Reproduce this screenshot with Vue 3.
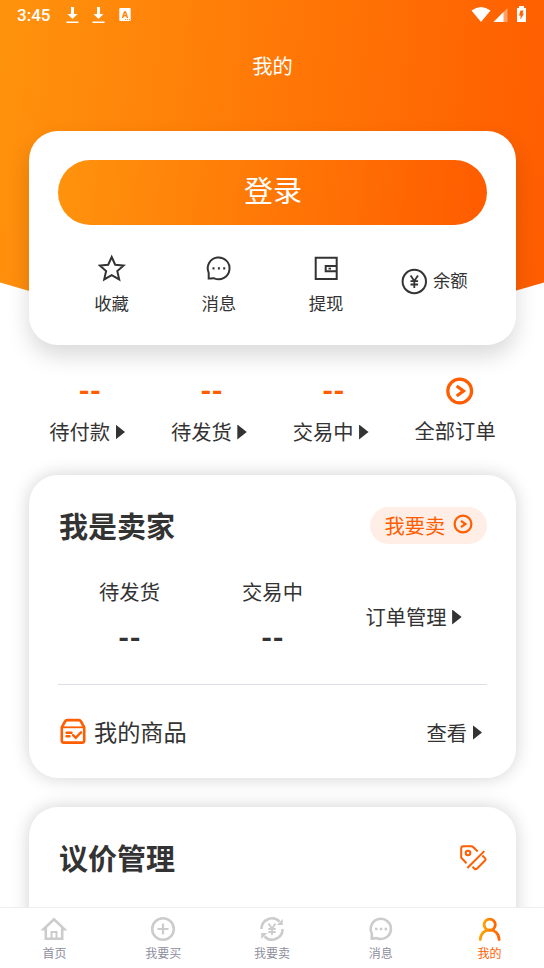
<script setup>
const orders = ['待付款', '待发货', '交易中']
const tabs = [
  { label: '首页', icon: 'home' },
  { label: '我要买', icon: 'buy' },
  { label: '我要卖', icon: 'sell' },
  { label: '消息', icon: 'chat' },
  { label: '我的', icon: 'user', active: true }
]
</script>

<template>
  <div class="page">
    <header class="hero">
      <div class="status">
        <span class="time">3:45</span>
        <svg v-for="n in 2" :key="n" class="dl" viewBox="0 0 13 17"><path d="M5 0h3v7h3.500L6.500 12 1.500 7H5zM.5 14.500h12V16H.5z" fill="#fff" /></svg>
        <svg class="badge" viewBox="0 0 12 13"><rect x=".3" width="11.400" height="13" rx="1" fill="#fff" /><path d="M3.500 10 5.500 4h1l2 6M4.300 7.800h3.400" fill="none" stroke-width="1.500" /><path d="M6 11.500h5" stroke-width=".8" stroke-dasharray="1 1" /></svg>
        <span class="space"></span>
        <svg class="sys" viewBox="0 0 56 17">
          <path d="M.5 4.500Q10-2.500 19.500 4.500L10 16z" fill="#fff" />
          <path d="M36.500 2v14H22.500z" fill="#fff" fill-opacity=".4" />
          <path d="M32.500 6v10h-10z" fill="#fff" />
          <path d="M46 2h2V0h5v2h2v14h-9z" fill="#fff" />
          <path d="M49.500 4.500h3l-1 3H53l-3.500 6v-4H48z" fill="#ff6303" />
        </svg>
      </div>
      <h1>我的</h1>
    </header>

    <main>
      <section class="card account">
        <button class="login">登录</button>
        <div class="shortcuts">
          <div class="shortcut">
            <svg viewBox="0 0 28 28"><path d="m13.700 3 3.500 7.700 8.400.8-6.300 5.600 1.900 8.300-7.500-4.300-7.500 4.300 1.900-8.300-6.300-5.600 8.400-.8z" /></svg>
            <span>收藏</span>
          </div>
          <div class="shortcut">
            <svg viewBox="0 0 28 28"><path d="M3.700 24.600V18.800A10.900 10.900 0 1 1 9.200 24.300C7.500 24 5.500 24.600 3.700 24.600Z" /><path d="M7.500 14.300h2M12.900 14.300h2M18.200 14.300h2" stroke-width="2.200" /></svg>
            <span>消息</span>
          </div>
          <div class="shortcut">
            <svg viewBox="0 0 28 28"><path d="M3.700 3.800h21v21.300h-21zM24.700 12h-11v5.300h11" /><path d="M16.500 14.600h2.500" stroke-width="1.800" /></svg>
            <span>提现</span>
          </div>
          <div class="balance">
            <svg viewBox="0 0 28 28"><circle cx="13.300" cy="13.500" r="11.700" /><path d="m9.600 7.500 3.700 5.500L17 7.500M13.300 12.500V20M9.500 13.200h7.600M9.500 16.500h7.600" stroke-width="1.800" /></svg>
            <span>余额</span>
          </div>
        </div>
      </section>

      <section class="orders">
        <div v-for="item in orders" :key="item" class="order">
          <b>--</b>
          <p>{{ item }}<i class="tri"></i></p>
        </div>
        <div class="order all">
          <svg viewBox="0 0 28 28"><circle cx="13.700" cy="14" r="11.900" /><path d="m10.700 9 6.800 5-6.800 5" /></svg>
          <p>全部订单</p>
        </div>
      </section>

      <section class="card seller">
        <div class="heading">
          <h2>我是卖家</h2>
          <button class="sell">我要卖<svg viewBox="0 0 20 20"><circle cx="10" cy="10" r="8.400" /><path d="m8 6.800 4.500 3.200L8 13.200" /></svg></button>
        </div>
        <div class="stats">
          <div class="stat"><span>待发货</span><b>--</b></div>
          <div class="stat"><span>交易中</span><b>--</b></div>
          <p class="manage">订单管理<i class="tri"></i></p>
        </div>
        <div class="goods">
          <svg viewBox="0 0 28 28"><path d="M2.800 10.300 6 4.500q.8-1.400 2.200-1.400h11.600q1.400 0 2.200 1.400l3.200 5.800v13.500q0 1.800-1.800 1.800H4.600q-1.800 0-1.800-1.800z" /><path d="M3 10.300h22" stroke-width="1.800" /><path d="M7.500 15.700h5M7.500 19.300h3M14 18.200l2.700 2.600 5.300-5.500" stroke-width="2.400" stroke-linecap="round" /></svg>
          <span>我的商品</span>
          <p>查看<i class="tri"></i></p>
        </div>
      </section>

      <section class="card bargain">
        <div class="heading">
          <h2>议价管理</h2>
          <svg viewBox="0 0 28 28"><path d="M7.500 19.200 2.200 13.700V4.300Q2.200 2.300 4.200 2.300H12q1.400 0 2.400 1l4.300 4.200M8.400 24 25.300 7.100M13.500 22.800l1.800 1.700q1.400 1.300 2.800 0l7.700-7.700q1.400-1.400.1-2.700l-2.500-2.600" /><circle cx="9" cy="9" r="2.300" /></svg>
        </div>
      </section>
    </main>

    <nav>
      <div v-for="tab in tabs" :key="tab.label" class="tab" :class="{ active: tab.active }">
        <svg viewBox="0 0 26 26">
          <template v-if="tab.icon === 'home'"><path d="M2.500 13.300 13 3.300l10.500 10h-2.300v9.500H4.800v-9.500z" /><path d="M10.500 23v-7h5v7" stroke-width="2" /></template>
          <template v-else-if="tab.icon === 'buy'"><circle cx="13" cy="13" r="10.800" /><path d="M13 7.500v11M7.500 13h11" stroke-width="2.200" /></template>
          <template v-else-if="tab.icon === 'sell'"><path d="M2.400 13A10.600 10.600 0 0 1 20.500 5.500M23.600 13A10.600 10.600 0 0 1 5.500 20.500" /><path d="M23.800 3v6h-6zM2.200 23v-6h6z" fill="currentColor" stroke="none" /><path d="m9.500 7.500 3.500 5 3.500-5M13 12v7M9.300 13h7.400M9.300 16h7.400" stroke-width="1.900" /></template>
          <template v-else-if="tab.icon === 'chat'"><path d="M3.800 22.600V17.400A10.100 10.100 0 1 1 9 22.200C7.200 22 5.500 22.600 3.800 22.600Z" /><path d="M7 13h2.500M11.800 13h2.500M16.600 13h2.500" stroke-width="2.500" /></template>
          <template v-else>
            <defs><linearGradient id="userTone" x1="0" x2="1"><stop stop-color="#ffa000" /><stop offset="1" stop-color="#ff6500" /></linearGradient></defs>
            <g class="user"><path d="M3.300 23.500C3.900 10.700 21.500 10.700 22.100 23.500" /><circle cx="12.700" cy="8.800" r="5.600" /></g>
          </template>
        </svg>
        <span>{{ tab.label }}</span>
      </div>
    </nav>
  </div>
</template>

<style>
body { background: #fff; overflow: hidden; }
</style>

<style scoped>
* { box-sizing: border-box; }
.page {
  display: flex;
  flex-direction: column;
  height: 968px;
  overflow: hidden;
  color: #333;
  font: 20.3px/30px Roboto, "Noto Sans CJK SC", sans-serif;
}
h1, h2, p { margin: 0; }
button { border: 0; padding: 0; font: inherit; }
svg { display: block; flex: none; fill: none; stroke: currentColor; stroke-width: 2; }
.hero {
  flex: none;
  height: 350px;
  margin-bottom: -219px;
  color: #fff;
  background: linear-gradient(97deg, #ff930d, #ff5d00 98%);
  clip-path: polygon(0 0, 100% 0, 100% 282.500px, 94.600% 291px, 75% 318px, 25% 318px, 5.400% 291px, 0 282.500px);
}
.status { display: flex; align-items: center; height: 30px; padding: 0 17px; }
.status svg { stroke: none; }
.time { width: 48.500px; font: 500 17px/30px Roboto, sans-serif; }
.status .dl { width: 13px; height: 17px; margin: 0 13.500px 0 0; }
.status .badge { width: 12px; height: 13px; margin-top: -1px; }
.status .badge path { stroke: #ff850c; }
.space { flex: 1; }
.status .sys { width: 56px; height: 17px; margin-top: -1px; }
h1 { padding: 22px 0 0 1px; font-size: 20.300px; font-weight: 400; line-height: 30px; text-align: center; }
main { position: relative; flex: 1; min-height: 0; padding: 40px 28px 0 29px; overflow: hidden; margin-top: -40px; }
.card { padding: 29px; border-radius: 29px; background: #fff; box-shadow: 0 0 18px rgba(0, 0, 0, .18); }
.account { height: 214px; box-shadow: 0 11px 22px rgba(0, 0, 0, .15); }
.login {
  display: block;
  width: 100%;
  height: 65px;
  padding: 0 0 2px 1px;
  border-radius: 33px;
  color: #fff;
  font-size: 29px;
  line-height: 62px;
  background: linear-gradient(97deg, #ff930d, #ff5d00 98%);
}
.shortcuts { display: grid; grid-template-columns: repeat(4, 1fr); padding-top: 29px; font-size: 17.400px; line-height: 25px; }
.shortcut { display: flex; flex-direction: column; align-items: center; gap: 10px; }
.shortcuts svg { width: 28px; height: 28px; }
.balance { display: flex; align-items: center; justify-content: center; gap: 4px; height: 55px; padding-left: 2px; }
.orders { display: grid; grid-template-columns: repeat(4, 1fr); height: 130px; padding-top: 28px; }
.order { text-align: center; }
.order b { display: block; height: 45px; color: #ff5d00; font-size: 29px; line-height: 36px; }
.order p { display: flex; align-items: center; justify-content: center; padding-right: 5.500px; }
.all svg { width: 28px; height: 28px; margin: 4px auto 13px 51.500px; color: #ff5d00; stroke-width: 3.200; }
.order.all p { padding: 0; line-height: 28px; }
.tri { width: 9.500px; height: 15px; margin: -2px 0 0 5.500px; background: #333; clip-path: polygon(0 0, 100% 50%, 0 100%); }
.seller { height: 303px; }
.heading { display: flex; align-items: center; justify-content: space-between; }
h2 { padding: 6px 0 0 1px; font-size: 29px; line-height: 36px; font-weight: 700; }
.sell { display: flex; align-items: center; width: 117px; height: 37px; padding: 3px 0 0 14.500px; border-radius: 19px; color: #ff5d00; background: #ffeee5; }
.sell svg { width: 20px; height: 20px; margin: -5px 0 0 7.500px; stroke-width: 2.200; }
.stats { display: grid; grid-template-columns: repeat(3, 1fr); height: 139px; padding-top: 32px; border-bottom: 1.500px solid #dcdfe6; }
.stat { display: flex; flex-direction: column; align-items: center; }
.stat b { margin-top: 12px; font-size: 29px; line-height: 36px; }
.manage { display: flex; align-items: center; height: 30px; margin-top: 25px; padding-left: 21.500px; }
.goods { display: flex; align-items: center; height: 95px; font-size: 23.200px; }
.goods svg { width: 28px; height: 28px; margin: -3px 7px 0 1px; color: #ff5d00; stroke-width: 2.600; }
.goods p { display: flex; align-items: center; margin-left: auto; padding: 2px 5px 0 0; font-size: 20.300px; }
.bargain { height: 160px; margin-top: 29px; }
.bargain svg { width: 28px; height: 28px; margin: 2px .5px 0 0; color: #ff5d00; }
nav { position: relative; flex: none; display: grid; grid-template-columns: repeat(5, 1fr); height: 61px; border-top: 1px solid #eee; background: #fff; }
.tab { display: flex; flex-direction: column; align-items: center; padding-top: 8px; color: #8e8e9d; font-size: 12px; line-height: 18px; }
.tab svg { width: 26px; height: 26px; margin-bottom: 3px; color: #ccc; stroke-width: 2.600; }
.tab.active { color: #ff5d00; }
.user { stroke: url(#userTone); stroke-width: 2.800; stroke-linecap: round; }
</style>
